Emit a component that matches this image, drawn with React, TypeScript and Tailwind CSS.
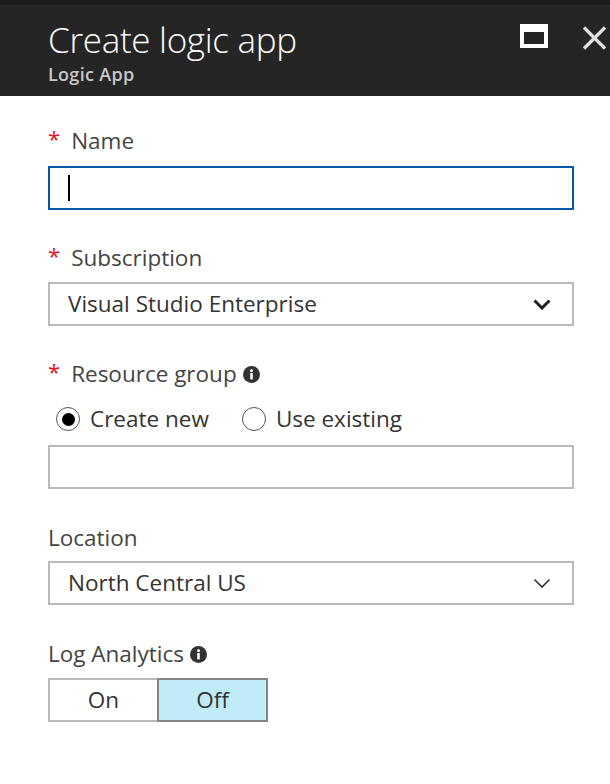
import React from 'react';

const font = { fontFamily: '"Open Sans", "Noto Sans", "Liberation Sans", sans-serif' };

function Star() {
  return <span className="mr-[11px] text-[22px] leading-none text-[#e81123] relative top-[-3px]">*</span>;
}

function Info() {
  return (
    <svg width="17" height="17" viewBox="0 0 16 16" className="ml-[6px]">
      <circle cx="8" cy="8" r="8" fill="#333" />
      <rect x="6.8" y="6.6" width="2.4" height="6" fill="#fff" />
      <circle cx="8" cy="4.4" r="1.4" fill="#fff" />
    </svg>
  );
}

function Label({ text, required, info }: { text: string; required?: boolean; info?: boolean }) {
  return (
    <div className="flex items-center h-[28px] text-[22.5px] text-[#444]">
      {required && <Star />}
      <span>{text}</span>
      {info && <Info />}
    </div>
  );
}

function Chevron({ bold }: { bold?: boolean }) {
  return (
    <svg width="18" height="11" viewBox="0 0 18 11">
      <path d="M1.5 1.5 L9 9 L16.5 1.5" fill="none" stroke={bold ? '#222' : '#333'} strokeWidth={bold ? 3 : 1.6} />
    </svg>
  );
}

function Select({ value, bold }: { value: string; bold?: boolean }) {
  return (
    <div className="flex items-center justify-between h-[44px] border-2 border-[#bababa] pl-[18px] pr-[21px] text-[22.5px] text-[#333]">
      <span>{value}</span>
      <Chevron bold={bold} />
    </div>
  );
}

function Radio({ checked, label }: { checked?: boolean; label: string }) {
  return (
    <div className="flex items-center">
      <span className="w-[24px] h-[24px] rounded-full border-[1.5px] border-[#555] flex items-center justify-center">
        {checked && <span className="w-[13px] h-[13px] rounded-full bg-black" />}
      </span>
      <span className="ml-[10px] text-[22.5px] text-[#333]">{label}</span>
    </div>
  );
}

export default function App() {
  return (
    <div className="w-[610px] h-[784px] bg-white" style={font}>
      <header className="h-[96px] bg-[#252525] border-t-[5px] border-[#1b1b1b] flex justify-between pl-[48px]">
        <div className="pt-[15px]">
          <div className="text-[35px] font-light leading-[40px] text-white tracking-[-0.3px]">Create logic app</div>
          <div className="mt-[2px] text-[18px] font-semibold leading-[24px] text-[#c8c8c8] tracking-[0.3px]">Logic App</div>
        </div>
        <div className="flex items-start pt-[19px]">
          <span className="w-[28px] h-[24px] border-4 border-t-8 border-white" />
          <svg width="25" height="24" viewBox="0 0 25 24" className="ml-[34px] mr-[3px] mt-[2px]">
            <path d="M2 1.5 L23 22.5 M23 1.5 L2 22.5" stroke="#e0e0e0" strokeWidth="3.2" />
          </svg>
        </div>
      </header>

      <div className="pl-[48px] pr-[36px] pt-[31px] flex flex-col">
        <Label text="Name" required />
        <div className="mt-[11px] h-[44px] border-2 border-[#005aab] pl-[18px] flex items-center">
          <span className="w-[2px] h-[26px] bg-black" />
        </div>

        <div className="mt-[34px]">
          <Label text="Subscription" required />
        </div>
        <div className="mt-[10px]">
          <Select value="Visual Studio Enterprise" bold />
        </div>

        <div className="mt-[34px]">
          <Label text="Resource group" required info />
        </div>
        <div className="mt-[17px] flex items-center gap-[33px] pl-[8px] h-[28px]">
          <Radio checked label="Create new" />
          <Radio label="Use existing" />
        </div>
        <div className="mt-[12px] h-[44px] border-2 border-[#bababa]" />

        <div className="mt-[35px]">
          <Label text="Location" />
        </div>
        <div className="mt-[9px]">
          <Select value="North Central US" />
        </div>

        <div className="mt-[35px]">
          <Label text="Log Analytics" info />
        </div>
        <div className="mt-[10px] flex h-[44px] w-[220px] text-[22.5px] text-[#333]">
          <div className="flex-1 flex items-center justify-center border-2 border-r-0 border-[#bababa] bg-white">On</div>
          <div className="flex-1 flex items-center justify-center border-2 border-[#858585] bg-[#c0ecf8]">Off</div>
        </div>
      </div>
    </div>
  );
}
